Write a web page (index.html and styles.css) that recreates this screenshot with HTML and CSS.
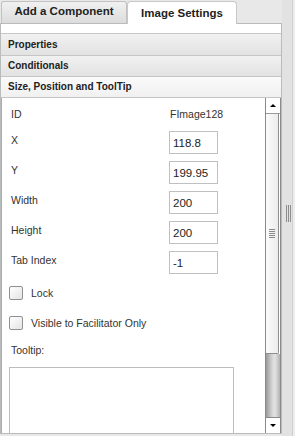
FILE: index.html
```html
<!DOCTYPE html>
<html lang="en">
<head>
    <meta charset="UTF-8">
    <title>Image Settings</title>
    <link rel="stylesheet" href="styles.css">
</head>
<body>

<div class="layout">
    <!-- Left side: tabs and settings panel -->
    <div class="sidebar">
        <div class="tabs">
            <div class="tab">Add a Component</div>
            <div class="tab active">Image Settings</div>
        </div>

        <div class="panel">
            <div class="acc-head first">Properties</div>
            <div class="acc-head">Conditionals</div>
            <div class="acc-head open">Size, Position and ToolTip</div>

            <div class="acc-body">
                <div class="form">
                    <div class="row info">
                        <span class="label">ID</span>
                        <span class="value">FImage128</span>
                    </div>
                    <div class="row">
                        <label class="label" for="pos-x">X</label>
                        <input class="field" type="text" id="pos-x" value="118.8">
                    </div>
                    <div class="row">
                        <label class="label" for="pos-y">Y</label>
                        <input class="field" type="text" id="pos-y" value="199.95">
                    </div>
                    <div class="row">
                        <label class="label" for="size-w">Width</label>
                        <input class="field" type="text" id="size-w" value="200">
                    </div>
                    <div class="row">
                        <label class="label" for="size-h">Height</label>
                        <input class="field" type="text" id="size-h" value="200">
                    </div>
                    <div class="row">
                        <label class="label" for="tab-index">Tab Index</label>
                        <input class="field" type="text" id="tab-index" value="-1">
                    </div>

                    <div class="check-row first-check">
                        <input class="check" type="checkbox" id="lock">
                        <label for="lock">Lock</label>
                    </div>
                    <div class="check-row">
                        <input class="check" type="checkbox" id="facilitator">
                        <label for="facilitator">Visible to Facilitator Only</label>
                    </div>

                    <label class="tooltip-label" for="tooltip">Tooltip:</label>
                    <textarea class="tooltip" id="tooltip"></textarea>
                </div>

                <!-- scrollbar drawn by hand -->
                <div class="scrollbar">
                    <div class="sb-btn"><span class="arrow-up"></span></div>
                    <div class="sb-thumb"><span class="sb-grip"></span></div>
                    <div class="sb-track"></div>
                    <div class="sb-btn down"><span class="arrow-down"></span></div>
                </div>
            </div>
        </div>
    </div>

    <!-- Right side: splitter -->
    <div class="splitter"><span class="split-grip"></span></div>
</div>

</body>
</html>
```

FILE: styles.css
```css
body {
    margin: 0;
    font-family: "Liberation Sans", Arial, sans-serif;
    background-color: #e8e8e8;
    color: #333;
}
.layout {
    display: flex;
    height: 436px;
    overflow: hidden;
}
.sidebar {
    width: 282px;
    height: 434px;
    display: flex;
    flex-direction: column;
}
.tabs {
    display: flex;
    align-items: flex-start;
    height: 23px;
    padding-left: 1px;
}
.tab {
    box-sizing: border-box;
    margin-top: 1px;
    width: 126px;
    height: 22px;
    border: 1px solid #c2c2c2;
    border-bottom: none;
    border-radius: 3px 3px 0 0;
    background: linear-gradient(#f1f1f1, #dcdcdc);
    font-size: 11.5px;
    font-weight: bold;
    line-height: 18px;
    color: #222;
    text-align: center;
}
.tab.active {
    position: relative;
    width: 110px;
    height: 23px;
    padding-top: 2px;
    background: #fff;
    border-color: #c8c8c8;
    border-radius: 4px 4px 0 0;
}
.panel {
    flex: 1;
    display: flex;
    flex-direction: column;
    border: 1px solid #b9bcbc;
    background-color: #fff;
    padding-top: 9px;
    min-height: 0;
}
.acc-head {
    box-sizing: border-box;
    height: 21px;
    border-top: 1px solid #c6c6c6;
    background: linear-gradient(#f1f1f1, #e2e2e2);
    padding-left: 7px;
    font-size: 10px;
    font-weight: bold;
    line-height: 20px;
    color: #222;
}
.acc-head.first {
    height: 22px;
    line-height: 21px;
}
.acc-head.open {
    height: 22px;
    border-bottom: 1px solid #c6c6c6;
    background: linear-gradient(#fafafa, #f0f0f0);
}
.acc-body {
    flex: 1;
    display: flex;
    min-height: 0;
    overflow: hidden;
    border-left: 1px solid #a9aeae;
}
.form {
    flex: 1;
    padding: 10px 0 0 7px;
    font-size: 10.5px;
    overflow: hidden;
}
.row {
    display: flex;
    align-items: flex-start;
    height: 23px;
    margin-bottom: 7px;
}
.row.info {
    height: 13px;
    margin-bottom: 10px;
}
.label {
    box-sizing: border-box;
    width: 160px;
    padding: 3px 0 0 2px;
    line-height: 13px;
}
.row.info .label {
    padding-top: 0;
}
.value {
    padding-left: 1px;
    line-height: 13px;
}
.field {
    box-sizing: border-box;
    width: 49px;
    height: 23px;
    margin: 0;
    padding: 0 3px;
    border: 1px solid #c0c0c0;
    font-family: "Liberation Sans", Arial, sans-serif;
    font-size: 11.5px;
    color: #222;
    outline: none;
}
.check-row {
    display: flex;
    align-items: center;
    height: 14px;
    margin-bottom: 16px;
    line-height: 14px;
}
.check-row.first-check {
    margin-top: 12px;
}
.check {
    appearance: none;
    box-sizing: border-box;
    width: 14px;
    height: 14px;
    margin: 0 8px 0 0;
    border: 1px solid #909090;
    border-radius: 2px;
    background: linear-gradient(135deg, #ffffff, #e4e4e4);
}
.tooltip-label {
    display: block;
    margin: -2px 0 10px 2px;
    line-height: 13px;
}
.tooltip {
    display: block;
    box-sizing: border-box;
    width: 225px;
    height: 90px;
    margin: 0;
    border: 1px solid #bdbdbd;
    resize: none;
    outline: none;
}
.scrollbar {
    box-sizing: border-box;
    width: 16px;
    display: flex;
    flex-direction: column;
    border-left: 1px solid #8a8a8a;
    border-right: 1px solid #8a8a8a;
}
.sb-btn {
    height: 16px;
    display: flex;
    align-items: center;
    justify-content: center;
    background: #fff;
    border-bottom: 1px solid #9a9a9a;
    box-sizing: border-box;
}
.sb-btn.down {
    height: 16px;
    border-bottom: none;
    border-top: 1px solid #8a8a8a;
}
.arrow-up {
    width: 0;
    height: 0;
    border-left: 3px solid transparent;
    border-right: 3px solid transparent;
    border-bottom: 3px solid #000;
}
.arrow-down {
    width: 0;
    height: 0;
    border-left: 3px solid transparent;
    border-right: 3px solid transparent;
    border-top: 3px solid #000;
}
.sb-thumb {
    box-sizing: border-box;
    height: 240px;
    display: flex;
    align-items: center;
    justify-content: center;
    margin-right: 1px;
    background: linear-gradient(to right, #fbfbfb, #ececec);
    border-right: 1px solid #8e8e8e;
    border-bottom: 1px solid #8e8e8e;
    border-radius: 0 0 2px 0;
}
.sb-grip {
    width: 6px;
    height: 9px;
    background: repeating-linear-gradient(#8a8a8a 0 1px, transparent 1px 2px);
}
.sb-track {
    flex: 1;
    background: linear-gradient(to right, #9a9a9a, #d6d6d6 45%, #e2e2e2 65%, #b2b2b2);
}
.splitter {
    width: 13px;
    background: linear-gradient(to right, #e2e2e2 0 10px, #d0d0d0 10px 11px, #ededed 11px);
}
.split-grip {
    display: block;
    width: 5px;
    height: 17px;
    margin: 205px 0 0 4px;
    background: repeating-linear-gradient(to right, #8c8c8c 0 1px, transparent 1px 2px);
}
```
